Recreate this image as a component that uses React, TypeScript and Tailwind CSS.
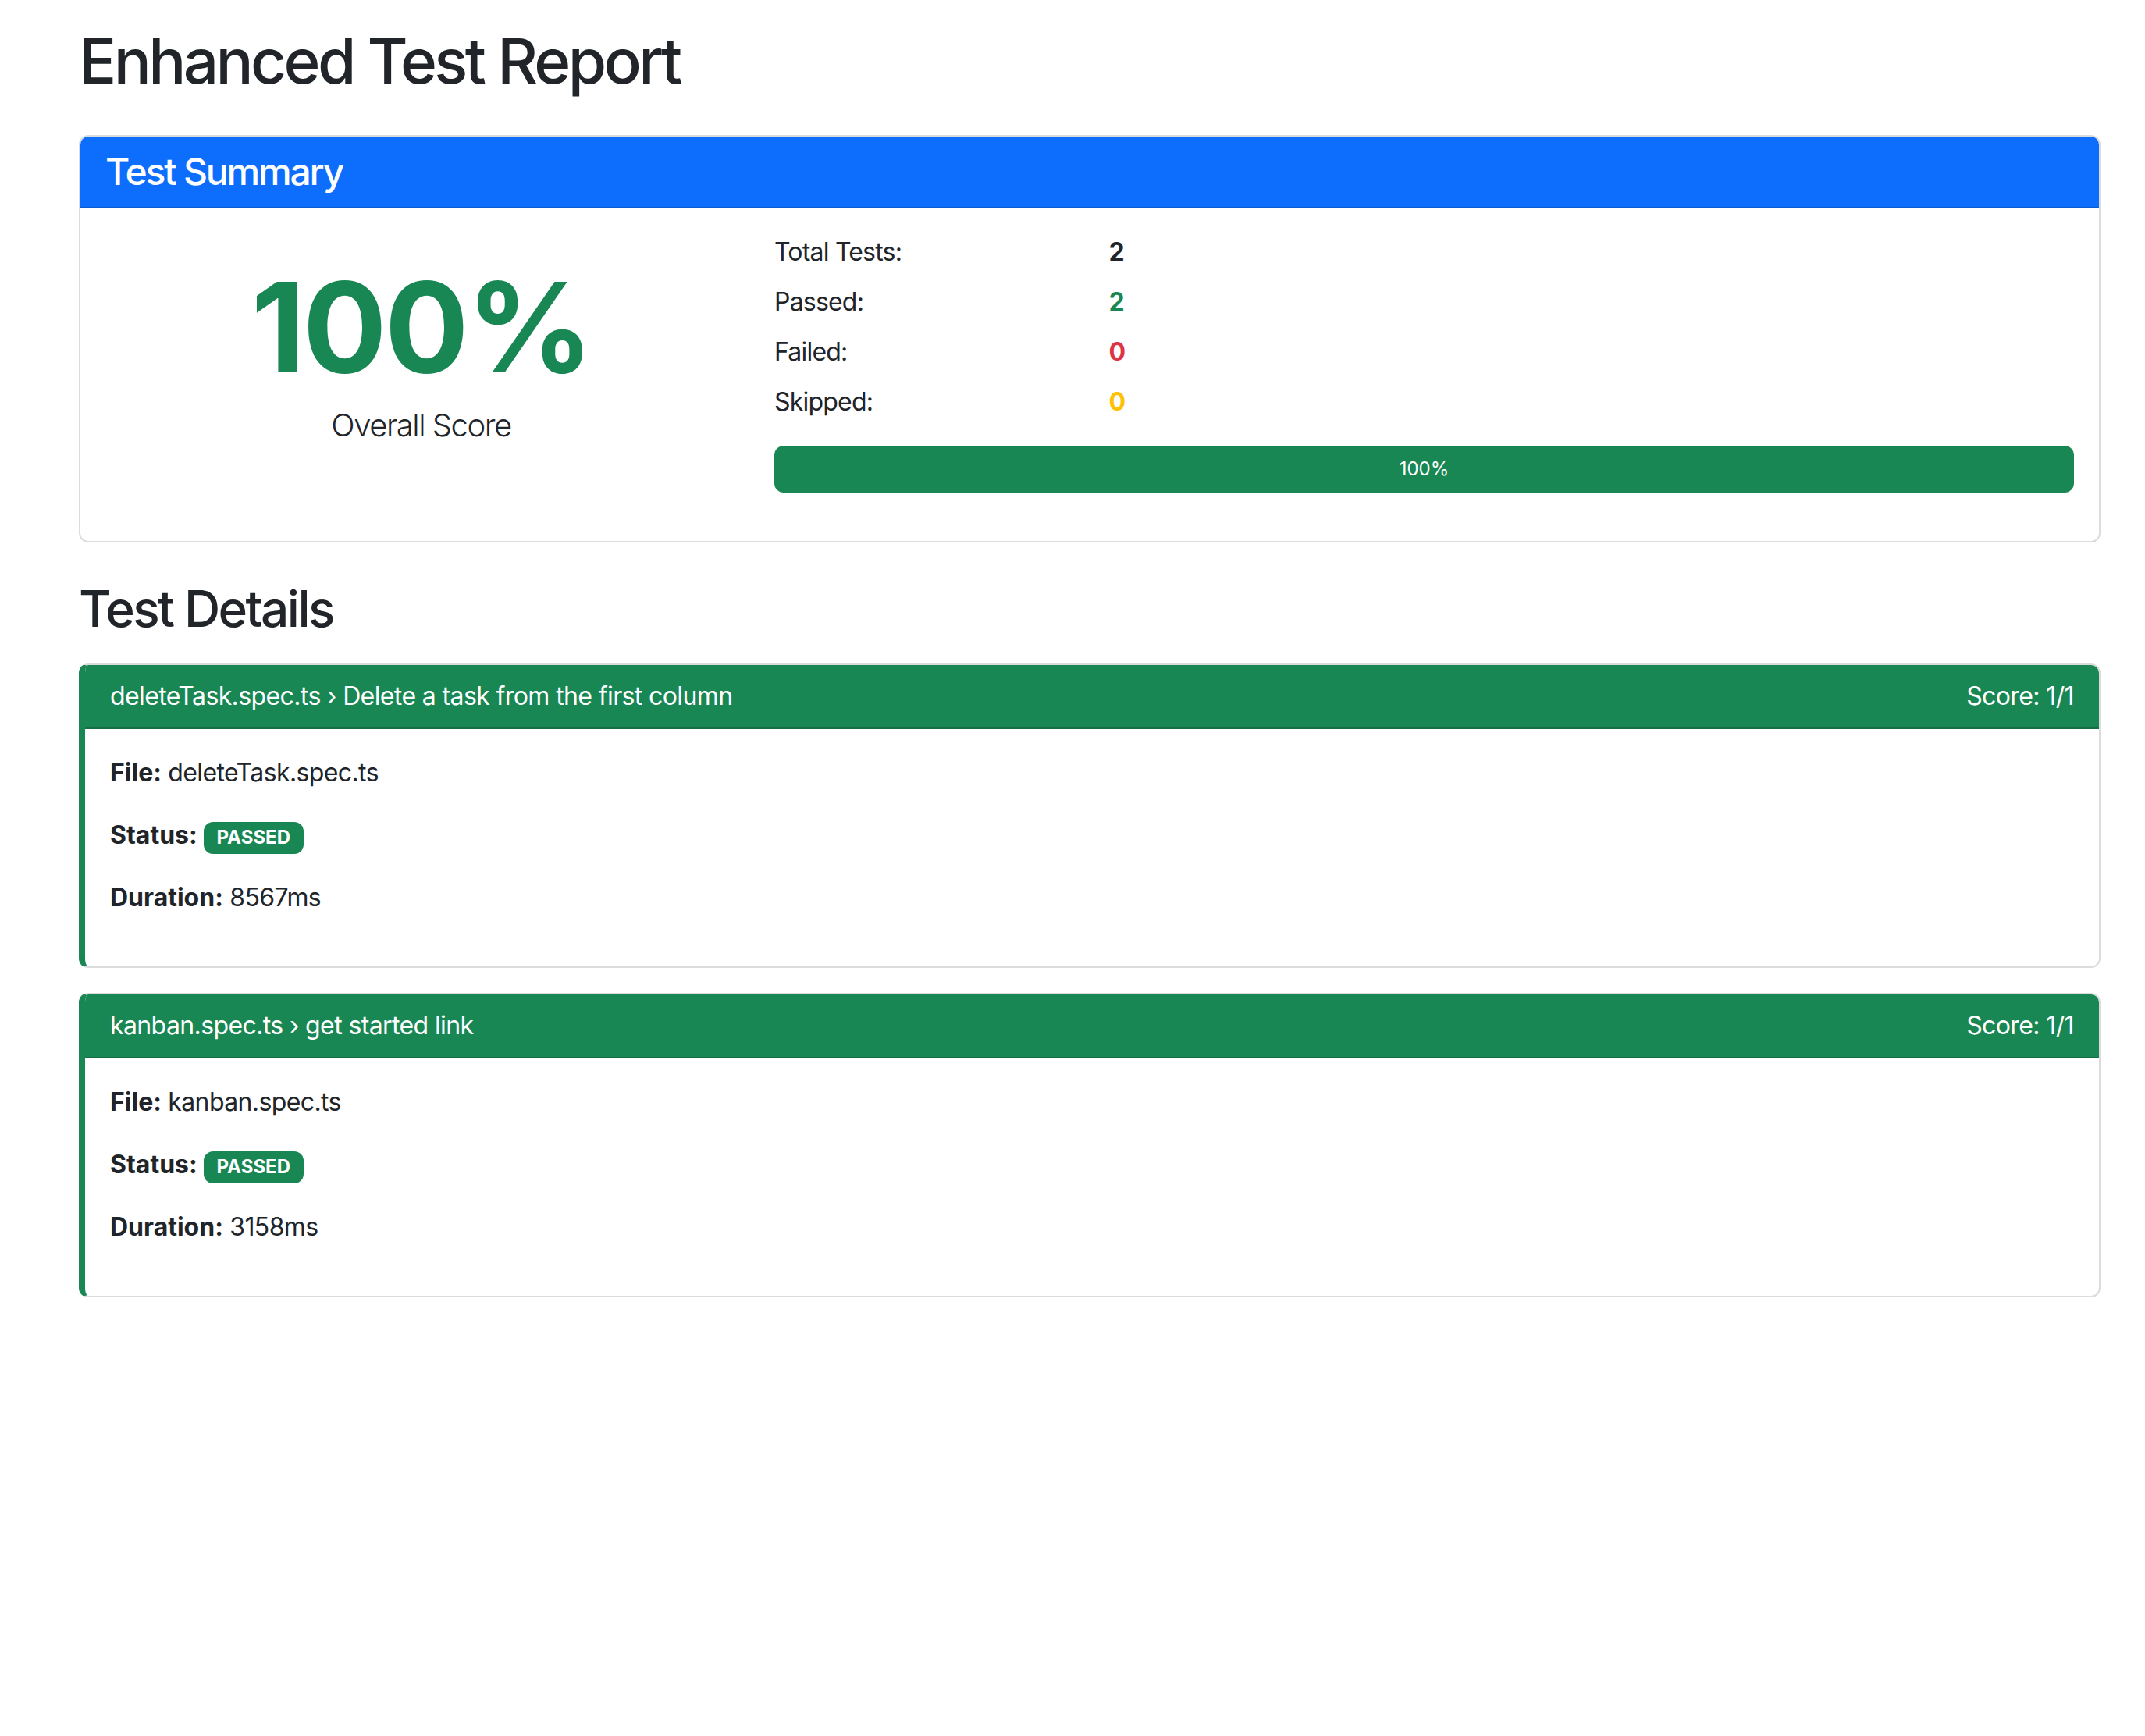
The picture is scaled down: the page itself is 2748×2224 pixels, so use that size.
import React from "react";

const tests: TestItem[] = [
  {
    title: "deleteTask.spec.ts › Delete a task from the first column",
    file: "deleteTask.spec.ts",
    duration: 8567,
  },
  {
    title: "kanban.spec.ts › get started link",
    file: "kanban.spec.ts",
    duration: 3158,
  },
];

export default function App() {
  return (
    <div className="min-h-screen bg-white text-[#212529] font-['Inter',sans-serif]">
      <div className="ml-[101px] w-[2590px] pt-[30px]">
        <h1 className="text-[80px] leading-[1.2] font-medium tracking-[-0.045em] mb-[47px]">
          Enhanced Test Report
        </h1>

        <SummaryCard />

        <h2 className="text-[64px] leading-[1.2] font-medium tracking-[-0.04em] mb-[32px]">
          Test Details
        </h2>

        {tests.map((t, i) => (
          <TestCard key={i} item={t} />
        ))}
      </div>
    </div>
  );
}

function SummaryCard() {
  const stats = [
    { label: "Total Tests:", value: "2", color: "text-[#212529]" },
    { label: "Passed:", value: "2", color: "text-[#198754]" },
    { label: "Failed:", value: "0", color: "text-[#dc3545]" },
    { label: "Skipped:", value: "0", color: "text-[#ffc107]" },
  ];

  return (
    <div className="rounded-[12px] border-2 border-[#dcdcdc] overflow-hidden mb-[47px]">
      <div className="bg-[#0d6efd] px-[32px] py-[16px] border-b-2 border-black/[.175]">
        <h4 className="text-[48px] leading-[1.2] font-medium tracking-[-0.045em] text-white">
          Test Summary
        </h4>
      </div>

      <div className="flex gap-[48px] p-[32px]">
        <div className="w-[809px] shrink-0 text-center pt-[24px]">
          <p className="text-[160px] leading-[1.2] font-bold tracking-[-0.018em] text-[#198754]">
            100%
          </p>
          <p className="text-[40px] leading-[1.5] font-light tracking-[-0.037em]">
            Overall Score
          </p>
        </div>

        <div className="flex-1">
          <div className="flex flex-col gap-[16px]">
            {stats.map((s) => (
              <div key={s.label} className="flex text-[32px] leading-[48px] tracking-[-0.025em]">
                <span className="w-[428.5px] shrink-0">{s.label}</span>
                <span className={`font-bold ${s.color}`}>{s.value}</span>
              </div>
            ))}
          </div>

          <div className="mt-[32px] mb-[30px] h-[60px] rounded-[12px] bg-[#198754] flex items-center justify-center text-white text-[24px]">
            100%
          </div>
        </div>
      </div>
    </div>
  );
}

function TestCard({ item }: { item: TestItem }) {
  return (
    <div className="rounded-[12px] border-2 border-[#dcdcdc] border-l-[8px] border-l-[#198754] overflow-hidden mb-[32px]">
      <div className="flex justify-between bg-[#198754] text-white px-[32px] py-[16px] text-[32px] leading-[48px] tracking-[-0.019em] border-b-2 border-black/[.175]">
        <span>{item.title}</span>
        <span>Score: 1/1</span>
      </div>

      <div className="p-[32px] text-[32px] leading-[48px] tracking-[-0.019em]">
        <p className="mb-[32px]">
          <strong className="font-bold tracking-normal">File:</strong> {item.file}
        </p>
        <p className="mb-[32px]">
          <strong className="font-bold tracking-normal">Status:</strong>{" "}
          <span className="inline-block bg-[#198754] text-white text-[24px] font-bold leading-none tracking-normal px-[16.5px] py-[8.4px] rounded-[12px]">
            PASSED
          </span>
        </p>
        <p className="mb-[32px]">
          <strong className="font-bold tracking-normal">Duration:</strong> {item.duration}ms
        </p>
      </div>
    </div>
  );
}

interface TestItem {
  title: string;
  file: string;
  duration: number;
}
